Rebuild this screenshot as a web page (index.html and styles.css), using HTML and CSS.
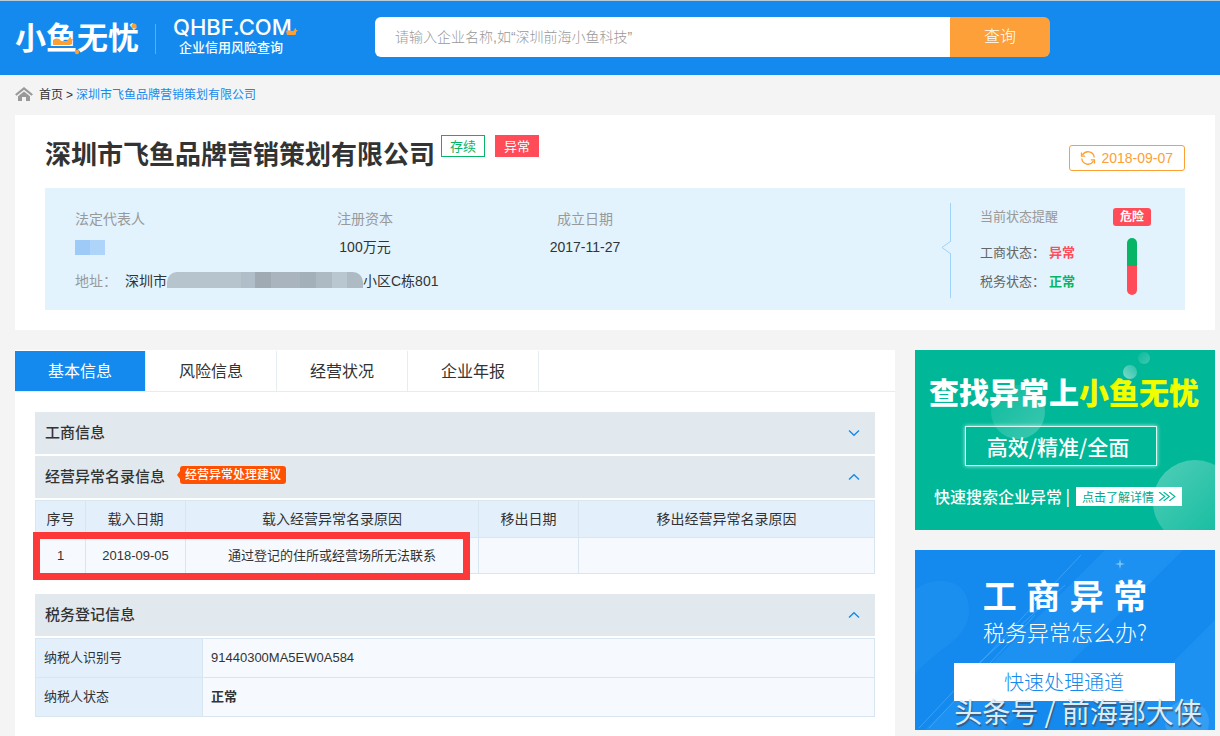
FILE: index.html
```html
<!DOCTYPE html>
<html lang="zh-CN">
<head>
<meta charset="utf-8">
<title>深圳市飞鱼品牌营销策划有限公司</title>
<link rel="stylesheet" href="styles.css">
</head>
<body>
<header class="topbar">
  <a class="brand" href="#">
    <span class="brand-name">小鱼无忧
      <svg class="brand-accent" viewBox="0 0 124 40" aria-hidden="true">
        <path fill="#fda033" d="M38 28v-5c3-2 6-2 8 1h5c3 0 2-4 5-4v2h2l-1 2v3l-2 1z"/>
        <circle fill="#fda033" cx="62" cy="35" r="2.2"/>
        <circle fill="#fda033" cx="119" cy="9" r="2.6"/>
      </svg>
    </span>
    <span class="brand-side">
      <span class="brand-domain">QHBF.COM
        <svg class="brand-duck" viewBox="0 0 12 8" aria-hidden="true"><path fill="#fda033" d="M0 3c2-1 4-1 5 0h2c2 0 1-3 3-3v2h2l-2 2v2l-1 1H1z"/></svg>
      </span>
      <span class="brand-slogan">企业信用风险查询</span>
    </span>
  </a>
  <form class="search">
    <input class="search-input" type="text" aria-label="企业名称" placeholder="请输入企业名称,如“深圳前海小鱼科技”">
    <button class="search-button" type="button">查询</button>
  </form>
</header>

<div class="page">
  <nav class="crumbs">
    <svg class="home-icon" viewBox="0 0 18 14" aria-hidden="true">
      <path d="M.8 8 9 1.400 17.200 8" fill="none" stroke="#999" stroke-width="2.200"/>
      <path d="M3 9.200 9 4.400l6 4.800V14h-4v-4H7v4H3z" fill="#999"/>
    </svg>
    <a class="crumb-home" href="#">首页</a><span>&gt;</span><a class="crumb-current" href="#">深圳市飞鱼品牌营销策划有限公司</a>
  </nav>

  <section class="company">
    <div class="company-head">
      <h1 class="company-name">深圳市飞鱼品牌营销策划有限公司</h1>
      <span class="tag tag-ok">存续</span>
      <span class="tag tag-bad">异常</span>
      <button class="refresh" type="button">
        <svg class="refresh-icon" viewBox="0 0 16 16" aria-hidden="true">
          <path d="M2.600 5A6.200 6.200 0 0 1 14.200 7.500M13.400 11A6.200 6.200 0 0 1 1.800 8.500M1.500 2.500v3.700h3.700M14.500 13.500V9.800h-3.700" fill="none" stroke="#fda033" stroke-width="1.300"/>
        </svg>
        2018-09-07
      </button>
    </div>
    <div class="info">
      <div class="facts">
        <dl class="fact-grid">
          <div class="fact fact-first"><dt>法定代表人</dt><dd><span class="mask-name"></span></dd></div>
          <div class="fact"><dt>注册资本</dt><dd>100万元</dd></div>
          <div class="fact"><dt>成立日期</dt><dd>2017-11-27</dd></div>
        </dl>
        <p class="address"><span class="address-label">地址<span class="colon">：</span></span><span>深圳市</span><span class="mask-address"></span><span>小区C栋801</span></p>
      </div>
      <div class="status">
        <svg class="status-notch" viewBox="0 0 10 13" aria-hidden="true"><path d="M10 0 1 6.500 10 13" fill="#e2f3fe" stroke="#9fd3fa"/></svg>
        <div class="status-list">
          <p class="status-title">当前状态提醒</p>
          <p>工商状态<span class="colon">：</span><b class="bad">异常</b></p>
          <p>税务状态<span class="colon">：</span><b class="good">正常</b></p>
        </div>
        <div class="risk">
          <span class="risk-badge">危险</span>
          <span class="risk-bar"></span>
        </div>
      </div>
    </div>
  </section>

  <div class="columns">
    <main class="detail">
      <nav class="tabs">
        <a class="tab tab-active" href="#">基本信息</a>
        <a class="tab" href="#">风险信息</a>
        <a class="tab" href="#">经营状况</a>
        <a class="tab" href="#">企业年报</a>
      </nav>
      <div class="panel">
        <button class="section-head" type="button"><span>工商信息</span>
          <svg class="chevron" viewBox="0 0 12 8" aria-hidden="true"><path d="M1 1.500 6 6.200l5-4.700"/></svg>
        </button>
        <button class="section-head" type="button"><span>经营异常名录信息</span><span class="advice">经营异常处理建议</span>
          <svg class="chevron" viewBox="0 0 12 8" aria-hidden="true"><path d="M1 6.500 6 1.800l5 4.700"/></svg>
        </button>
        <div class="abnormal">
          <table class="grid">
            <colgroup><col class="c-no"><col class="c-date"><col class="c-reason"><col class="c-date"><col></colgroup>
            <thead><tr><th>序号</th><th>载入日期</th><th>载入经营异常名录原因</th><th>移出日期</th><th>移出经营异常名录原因</th></tr></thead>
            <tbody><tr><td>1</td><td>2018-09-05</td><td>通过登记的住所或经营场所无法联系</td><td></td><td></td></tr></tbody>
          </table>
          <span class="marker"></span>
        </div>
        <button class="section-head" type="button"><span>税务登记信息</span>
          <svg class="chevron" viewBox="0 0 12 8" aria-hidden="true"><path d="M1 6.500 6 1.800l5 4.700"/></svg>
        </button>
        <table class="grid tax">
          <colgroup><col class="c-label"><col></colgroup>
          <tbody>
            <tr><th scope="row">纳税人识别号</th><td>91440300MA5EW0A584</td></tr>
            <tr><th scope="row">纳税人状态</th><td><b>正常</b></td></tr>
          </tbody>
        </table>
      </div>
    </main>

    <aside class="side">
      <a class="banner banner-green" href="#">
        <svg class="decor" viewBox="0 0 300 180" preserveAspectRatio="none" aria-hidden="true">
          <defs>
            <linearGradient id="g1" x1="0" y1="0" x2="1" y2="1"><stop offset="0" stop-color="#fff" stop-opacity=".05"/><stop offset="1" stop-color="#fff" stop-opacity=".24"/></linearGradient>
            <linearGradient id="g2" x1="0" y1="0" x2="1" y2="1"><stop offset="0" stop-color="#fff" stop-opacity=".32"/><stop offset="1" stop-color="#fff" stop-opacity=".04"/></linearGradient>
            <linearGradient id="g3" x1="1" y1="0" x2="0" y2="1"><stop offset="0" stop-color="#fff" stop-opacity=".15"/><stop offset="1" stop-color="#fff" stop-opacity=".5"/></linearGradient>
          </defs>
          <circle cx="103" cy="62" r="27" fill="url(#g1)"/>
          <circle cx="280" cy="152" r="42" fill="url(#g2)"/>
          <circle cx="215" cy="22" r="7" fill="url(#g3)"/>
          <circle cx="229" cy="8" r="6" fill="url(#g1)"/>
        </svg>
        <strong class="green-title">查找异常上<em>小鱼无忧</em></strong>
        <span class="green-box">高效/精准/全面</span>
        <span class="green-foot"><span>快速搜索企业异常 |</span>
          <span class="green-more">点击了解详情
            <svg class="arrows" viewBox="0 0 16 8" aria-hidden="true"><path d="m1 0 5 4-5 4M5 0l5 4-5 4M10 0l5 4-5 4" fill="none" stroke="#00b798"/></svg>
          </span>
        </span>
      </a>
      <a class="banner banner-blue" href="#">
        <svg class="decor" viewBox="0 0 300 180" preserveAspectRatio="none" aria-hidden="true">
          <path d="M190 0h78L88 180H10z" fill="#2b9bf5" opacity=".4"/>
          <path d="M300 70v110H190z" fill="#2b9bf5" opacity=".4"/>
          <path d="M0 40c20-16 54-12 54 20 0 30-30 36-54 64z" fill="#2b9bf5" opacity=".3"/>
          <circle cx="272" cy="172" r="22" fill="#49abf8" opacity=".5"/>
          <path d="M166 5 4 178M150 35 62 115M120 65 14 178" fill="none" stroke="#54b0fa" opacity=".6"/>
          <path d="m205 9 1 4 4 1-4 1-1 4-1-4-4-1 4-1z" fill="#7cc3fb"/>
        </svg>
        <strong class="blue-title">工 商 异 常</strong>
        <span class="blue-sub">税务异常怎么办?</span>
        <span class="blue-button">快速处理通道</span>
        <span class="watermark">头条号 / 前海郭大侠</span>
      </a>
    </aside>
  </div>
</div>
</body>
</html>
```
FILE: styles.css
```css
* { box-sizing: border-box; }
body {
  margin: 0;
  min-height: 100vh;
  display: flex;
  flex-direction: column;
  background: #f4f4f4;
  color: #333;
  font: 14px/20px "Liberation Sans", "Noto Sans CJK SC", sans-serif;
}
a { color: inherit; text-decoration: none; }
button, input { font: inherit; color: inherit; border: 0; margin: 0; }
h1, p, dl, dd { margin: 0; }
svg { display: block; }
.colon { font-family: "Noto Sans CJK TC", sans-serif; line-height: 1; }

.topbar {
  display: flex;
  height: 75px;
  padding: 16px 15px 0;
  border-top: 1px solid #b8c9d8;
  background: #148aee;
}
.brand { display: flex; width: 360px; color: #fff; }
.brand-name {
  position: relative;
  width: 125px;
  font-size: 31px;
  font-weight: 700;
  line-height: 44px;
  white-space: nowrap;
}
.brand-accent { position: absolute; left: 0; top: 0; width: 124px; height: 40px; }
.brand-side {
  display: flex;
  flex-direction: column;
  height: 30px;
  margin: 7px 0 0 15px;
  padding-left: 17px;
  border-left: 1px solid #5aaef4;
}
.brand-domain {
  position: relative;
  margin-top: -8px;
  font: 500 22px/22px Inter, sans-serif;
  white-space: nowrap;
}
.brand-duck { position: absolute; right: -6px; bottom: 2px; width: 12px; height: 8px; }
.brand-slogan { padding-left: 6px; font-size: 13px; font-weight: 500; line-height: 20px; white-space: nowrap; }

.search { display: flex; flex: 0 1 675px; height: 40px; border-radius: 6px; overflow: hidden; }
.search-input { flex: 1; min-width: 0; padding: 0 20px; background: #fff; font-size: 14px; outline: 0; }
.search-input::placeholder { color: #999; font-weight: 300; opacity: 1; }
.search-button { width: 100px; background: #fda039; color: #fff; font-size: 16px; font-weight: 300; }

.page { flex: 1; display: flex; flex-direction: column; padding: 0 5px 0 15px; }
.crumbs { display: flex; align-items: center; height: 40px; font-size: 12px; }
.home-icon { width: 18px; height: 14px; margin: 0 6px 3px 0; }
.crumbs span { margin: 0 3px; }
.crumb-current { color: #148aee; }

.company { padding: 0 30px 20px; background: #fff; }
.company-head { display: flex; align-items: flex-start; height: 73px; padding-top: 20px; }
.company-name { font-size: 26px; line-height: 40px; font-weight: 700; white-space: nowrap; margin-right: 6px; }
.tag { width: 44px; height: 22px; margin-right: 10px; border: 1px solid; font-size: 13px; line-height: 22px; text-align: center; }
.tag-ok { color: #08b567; }
.tag-bad { color: #fff; background: #ff4c58; border-color: #ff4c58; }
.refresh {
  display: flex;
  align-items: center;
  gap: 5px;
  height: 26px;
  margin: 10px 0 0 auto;
  padding: 0 11px 0 10px;
  border: 1px solid #fda033;
  border-radius: 3px;
  background: #fff;
  color: #fda033;
  white-space: nowrap;
}
.refresh-icon { width: 16px; height: 16px; }

.info { display: flex; justify-content: space-between; height: 122px; padding-left: 30px; background: #e2f3fe; }
.facts { padding-top: 21px; }
.fact-grid { display: grid; grid-template-columns: 180px 220px 220px; }
.fact { text-align: center; }
.fact-first { text-align: left; }
.fact dt { color: #999; }
.fact dd { height: 20px; margin-top: 8px; }
.mask-name { display: block; width: 30px; height: 15px; margin-top: 11px; background: linear-gradient(90deg, #9dcaf7 50%, #aed5f9 50%); }
.address { display: flex; align-items: center; height: 20px; margin-top: 11px; }
.address-label { width: 50px; color: #999; }
.mask-address {
  width: 196px;
  height: 16px;
  margin-bottom: 2px;
  border-radius: 10px 10px 0 0;
  background: linear-gradient(90deg, #b5c4cd 0 38%, #afbec9 38% 45%, #9faab3 45% 53%, #a9b4bf 53% 68%, #a3afb9 68% 76%, #adbac4 76% 84%, #b9c7d1 84% 92%, #aebbc4 92%);
}
.status {
  position: relative;
  display: flex;
  width: 235px;
  margin: 15px 0 12px;
  border-left: 1px solid #9fd3fa;
  padding: 0 34px 0 29px;
  justify-content: space-between;
}
.status-notch { position: absolute; left: -10px; top: 38px; width: 10px; height: 13px; }
.status-list { padding-top: 4px; font-size: 13px; color: #666; white-space: nowrap; }
.status-list p { height: 20px; margin-bottom: 9px; }
.status-list .status-title { margin-bottom: 16px; color: #999; }
.status-list b { margin-left: 4px; }
.bad { color: #ff4c58; }
.good { color: #08b567; }
.risk { display: flex; flex-direction: column; align-items: center; gap: 12px; padding-top: 5px; }
.risk-badge { padding: 0 7px; border-radius: 3px; background: #ff4c58; color: #fff; font-size: 12px; line-height: 18px; font-weight: 700; }
.risk-bar { width: 10px; height: 57px; border-radius: 5px; background: linear-gradient(#08b567 50%, #ff4c58 50%); }

.columns { flex: 1; display: flex; gap: 20px; margin-top: 20px; }
.detail { flex: 1; min-width: 0; padding-top: 1px; background: #fff; }
.tabs { display: flex; border-bottom: 1px solid #e5edf0; }
.tab { width: 131px; height: 40px; border-right: 1px solid #e5edf0; font-size: 16px; line-height: 42px; text-align: center; }
.tab-active { background: #148aee; color: #fff; background-clip: padding-box; }
.panel { padding: 20px 20px 10px; }
.section-head {
  display: flex;
  align-items: center;
  width: 100%;
  height: 42px;
  margin-bottom: 2px;
  padding: 0 15px 0 10px;
  background: #e1e9ef;
  font-size: 15px;
  font-weight: 500;
}
.chevron { width: 12px; height: 8px; margin-left: auto; fill: none; stroke: #148aee; stroke-width: 1.4; }
.advice {
  position: relative;
  margin: 0 0 4px 15px;
  padding: 0 5px;
  border-radius: 3px;
  background: #ff5100;
  color: #fff;
  font-size: 12px;
  line-height: 18px;
}
.advice::before {
  content: "";
  position: absolute;
  left: -3px;
  top: 5px;
  border: solid transparent;
  border-width: 4px 3px 4px 0;
  border-right-color: #ff5100;
}
.abnormal { position: relative; margin-bottom: 20px; }
.grid { width: 100%; table-layout: fixed; border-collapse: collapse; background: #f6fafe; }
.grid th, .grid td { height: 37px; padding: 0; border: 1px solid #d7e6f0; text-align: center; font-weight: 400; line-height: 20px; }
.grid th { background: #e3f0fc; }
.grid td { height: 36px; font-size: 13px; }
.c-no { width: 50px; }
.c-date { width: 100px; }
.c-reason { width: 293px; }
.c-label { width: 167px; }
.grid.tax th, .grid.tax td { height: 39px; padding-left: 8px; text-align: left; font-size: 13px; }
.marker { position: absolute; left: -2px; right: 405px; top: 32px; bottom: -6px; border: 7px solid #fd3838; }

.side { display: flex; flex-direction: column; gap: 20px; width: 300px; }
.banner {
  position: relative;
  display: flex;
  flex-direction: column;
  align-items: center;
  height: 180px;
  overflow: hidden;
  color: #fff;
  font-family: "Noto Sans CJK SC", sans-serif;
  white-space: nowrap;
}
.banner > * { position: relative; }
.banner > .decor { position: absolute; left: 0; top: 0; width: 100%; height: 100%; }
.banner-green { background: #00b798; }
.green-title { margin: 20px 2px 0 0; font-size: 30px; line-height: 42px; font-weight: 900; }
.green-title em { font-style: normal; color: #f0ff00; }
.green-box {
  width: 192px;
  margin: 14px 8px 0 0;
  padding-right: 6px;
  border: 1px solid #d9fff6;
  box-shadow: 0 0 4px #b9f5e8;
  font-size: 21px;
  font-weight: 500;
  line-height: 38px;
  text-align: center;
}
.green-foot { display: flex; align-items: center; gap: 6px; margin: 20px 14px 0 0; font-size: 16px; font-weight: 500; line-height: 20px; }
.green-more { display: flex; align-items: center; gap: 4px; padding: 0 6px; background: #fff; color: #00a98c; font-size: 12px; font-weight: 400; line-height: 19px; }
.arrows { width: 18px; height: 9px; }
.banner-blue { background: #148aee; }
.blue-title { margin-top: 25px; font: 700 34px/44px "Liberation Sans", "Noto Sans CJK SC", sans-serif; }
.blue-sub { font-size: 22px; line-height: 24px; }
.blue-sub, .blue-button { font-weight: 300; }
.blue-button { width: 221px; margin: 20px 2px 0 0; background: #fff; color: #148aee; font-size: 20px; line-height: 38px; text-align: center; }
.watermark { margin: -8px -26px 0 0; color: #dcecfa; font-size: 28px; line-height: 36px; text-shadow: 1px 2px 1px #3c5a78; }
```
